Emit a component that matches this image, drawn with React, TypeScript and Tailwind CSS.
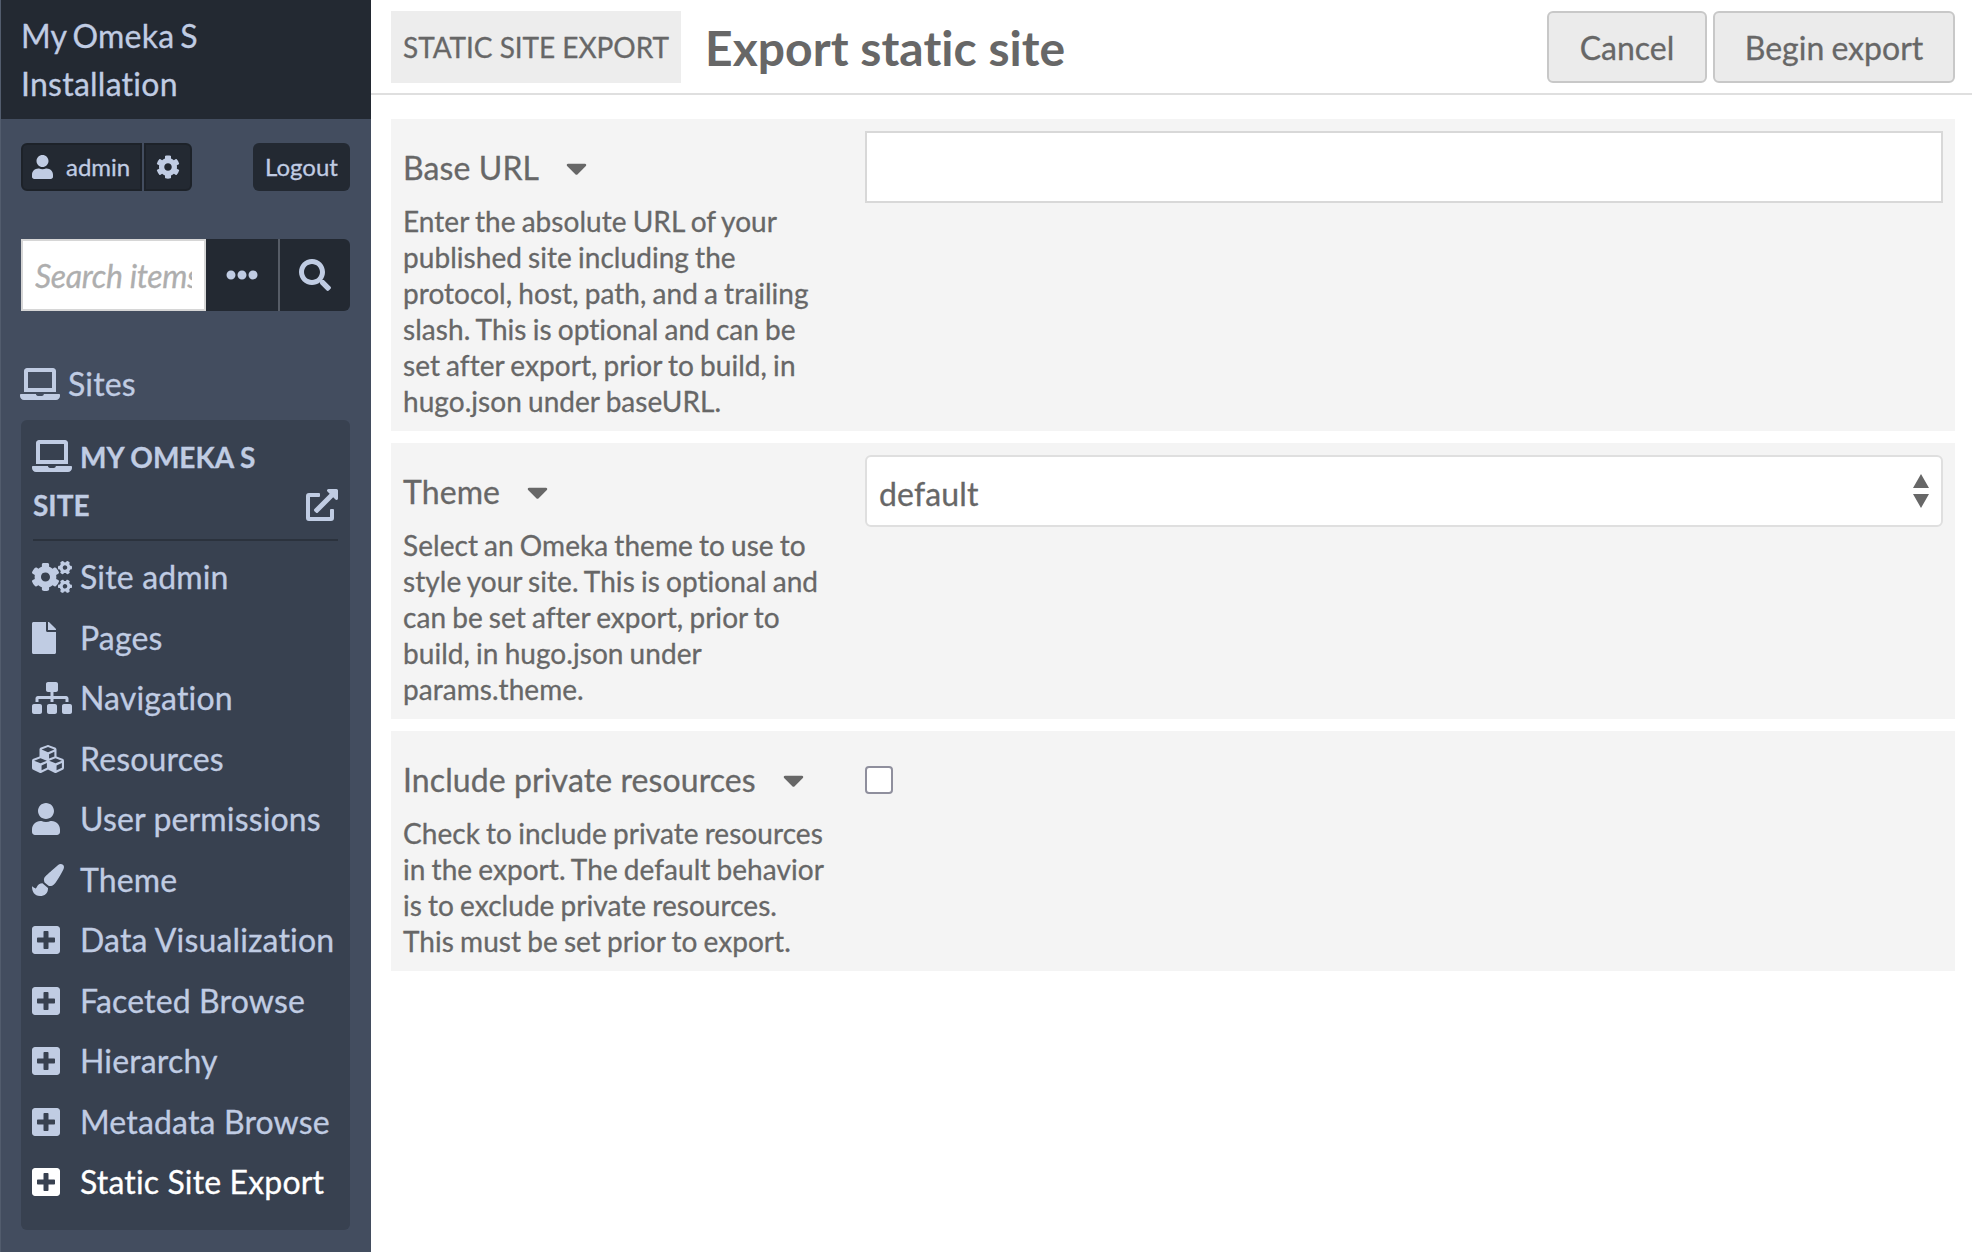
import React from "react";
import type { IconType } from "react-icons";
import {
  FaCaretDown,
  FaCog,
  FaCogs,
  FaCubes,
  FaEllipsisH,
  FaExternalLinkAlt,
  FaFile,
  FaLaptop,
  FaPaintBrush,
  FaPlusSquare,
  FaSearch,
  FaSitemap,
  FaUser,
} from "react-icons/fa";

type NavItem = { label: string; icon: IconType; size: string; active?: boolean };

const navItems: NavItem[] = [
  { label: "Site admin", icon: FaCogs, size: "w-10 h-8" },
  { label: "Pages", icon: FaFile, size: "w-6 h-8" },
  { label: "Navigation", icon: FaSitemap, size: "w-10 h-8" },
  { label: "Resources", icon: FaCubes, size: "w-8 h-8" },
  { label: "User permissions", icon: FaUser, size: "w-7 h-8" },
  { label: "Theme", icon: FaPaintBrush, size: "w-8 h-8" },
  { label: "Data Visualization", icon: FaPlusSquare, size: "w-7 h-8" },
  { label: "Faceted Browse", icon: FaPlusSquare, size: "w-7 h-8" },
  { label: "Hierarchy", icon: FaPlusSquare, size: "w-7 h-8" },
  { label: "Metadata Browse", icon: FaPlusSquare, size: "w-7 h-8" },
  { label: "Static Site Export", icon: FaPlusSquare, size: "w-7 h-8", active: true },
];

function Sidebar() {
  return (
    <aside className="flex w-[371px] shrink-0 flex-col border-l border-[#525c6d] bg-[#434d5f] text-[#c0cce3]">
      <div className="h-[119px] bg-[#232932] pt-3 pr-5 pl-5">
        <a className="block w-[260px] tracking-[0.25px] [word-spacing:-2.5px]">
          My Omeka S Installation
        </a>
      </div>

      <div className="mt-6 mr-[21px] ml-5 flex h-12 items-stretch justify-between text-2xl">
        <div className="flex gap-0.5">
          <a className="flex w-[121px] items-center gap-[13px] rounded-l-md border-2 border-[#1d2229] bg-[#232932] pl-[9px]">
            <FaUser className="h-6 w-[21px] shrink-0" />
            <span>admin</span>
          </a>
          <a className="flex w-12 items-center justify-center rounded-r-md border-2 border-[#1d2229] bg-[#232932]">
            <FaCog className="size-6" />
          </a>
        </div>
        <a className="flex w-[97px] items-center justify-center rounded-md bg-[#232932]">Logout</a>
      </div>

      <form className="mt-12 mr-[21px] ml-5 flex h-[72px]">
        <div className="w-[185px] border-2 border-[#d6d6d6] bg-white px-3">
          <input
            className="block h-full w-full pt-px italic tracking-[-0.35px] outline-none placeholder:text-[#aeaeae]"
            placeholder="Search items"
          />
        </div>
        <button type="button" className="flex w-[72px] items-center justify-center bg-[#232932]">
          <FaEllipsisH className="size-8" />
        </button>
        <button
          type="button"
          className="flex flex-1 items-center justify-center rounded-r-md border-l-2 border-[#565c66] bg-[#232932]"
        >
          <FaSearch className="size-8" />
        </button>
      </form>

      <a className="mt-[49px] ml-[19px] flex h-12 items-center gap-2 tracking-[0.15px]">
        <FaLaptop className="h-8 w-10" />
        <span>Sites</span>
      </a>

      <nav className="mt-3 mr-[21px] ml-5 h-[810px] rounded-md bg-[#384150] px-3 pt-[11px]">
        <div className="flex h-[110px] items-end justify-between border-b-2 border-[#2b323d] pb-2.5">
          <div className="w-[240px] text-[28px] leading-[48px] font-bold uppercase">
            <FaLaptop className="mr-2 -ml-px inline-block h-8 w-10 align-[-4px]" />
            My Omeka S Site
          </div>
          <FaExternalLinkAlt className="mb-2 size-8" />
        </div>
        <ul className="-ml-px pt-1.5">
          {navItems.map(({ label, icon: Icon, size, active }) => (
            <li
              key={label}
              className={`flex h-[60.5px] items-center tracking-[0.15px] whitespace-nowrap ${active ? "text-white" : ""}`}
            >
              <span className="w-12 shrink-0">
                <Icon className={size} />
              </span>
              <span>{label}</span>
            </li>
          ))}
        </ul>
      </nav>
    </aside>
  );
}

function Field({
  label,
  help,
  children,
}: {
  label: string;
  help: string;
  children: React.ReactNode;
}) {
  return (
    <div className="flex bg-[#f4f4f4] p-3">
      <div className="w-[462px] shrink-0 pt-[13px]">
        <div className="flex h-[59px] items-start">
          <label className="tracking-[0.1px]">{label}</label>
          <FaCaretDown className="mt-[7px] ml-[27px] h-[34px] w-[21px]" />
        </div>
        <p className="w-[425px] text-[28px] leading-9 tracking-[0.05px] [word-spacing:-1.1px]">{help}</p>
      </div>
      <div className="min-w-0 flex-1">{children}</div>
    </div>
  );
}

export default function App() {
  return (
    <div className="flex h-[1252px] w-[1972px] overflow-hidden bg-white font-['Lato',sans-serif] text-[32px] leading-[48px] text-[#676767] [-webkit-text-stroke:0.3px] [font-variant-ligatures:none]">
      <Sidebar />
      <main className="min-w-0 flex-1">
        <header className="flex h-[95px] items-start border-b-2 border-[#dfdfdf] pt-[11px] pr-[17px] pl-5">
          <div className="flex h-[72px] w-[290px] items-center bg-[#ededed] pl-3 text-[28px] tracking-[-0.05px] whitespace-nowrap uppercase">
            Static Site Export
          </div>
          <h1 className="ml-6 flex h-[72px] items-center pt-0.5 text-5xl font-bold tracking-[0.05px] [-webkit-text-stroke:0px]">
            Export static site
          </h1>
          <div className="ml-auto flex gap-1.5">
            <button
              type="button"
              className="h-[72px] w-[160px] rounded-md border-2 border-[#c8c8c8] bg-[#ebebeb] pt-0.5"
            >
              Cancel
            </button>
            <button
              type="button"
              className="h-[72px] w-[242px] rounded-md border-2 border-[#c8c8c8] bg-[#ebebeb] pt-0.5 [word-spacing:-1px]"
            >
              Begin export
            </button>
          </div>
        </header>

        <form className="flex flex-col gap-3 pt-6 pr-[17px] pl-5">
          <Field
            label="Base URL"
            help="Enter the absolute URL of your published site including the protocol, host, path, and a trailing slash. This is optional and can be set after export, prior to build, in hugo.json under baseURL."
          >
            <input className="block h-[72px] w-full border-2 border-[#d8d8d8] bg-white px-3 outline-none" />
          </Field>
          <Field
            label="Theme"
            help="Select an Omeka theme to use to style your site. This is optional and can be set after export, prior to build, in hugo.json under params.theme."
          >
            <div className="flex h-[72px] items-center justify-between rounded-md border-2 border-[#dfdfdf] bg-white pr-3 pl-3">
              <span className="pt-1.5 tracking-[0.15px]">default</span>
              <svg className="h-[34px] w-4" viewBox="0 0 16 34" fill="#676767">
                <path d="M8 0 16 14H0ZM8 34 0 20H16Z" />
              </svg>
            </div>
          </Field>
          <Field
            label="Include private resources"
            help="Check to include private resources in the export. The default behavior is to exclude private resources. This must be set prior to export."
          >
            <input
              type="checkbox"
              className="mt-[23px] block size-7 appearance-none rounded-[4px] border-2 border-[#8f8f9d] bg-white"
            />
          </Field>
        </form>
      </main>
    </div>
  );
}
